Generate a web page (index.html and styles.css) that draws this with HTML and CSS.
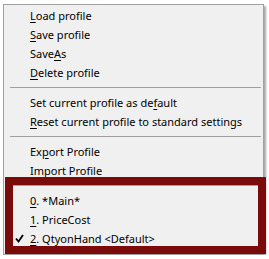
FILE: index.html
```html
<!DOCTYPE html>
<html lang="en">
<head>
  <meta charset="UTF-8">
  <title>Profile menu</title>
  <link rel="stylesheet" href="styles.css">
</head>
<body>

<div class="menu">
  <div class="item"><u>L</u>oad profile</div>
  <div class="item"><u>S</u>ave profile</div>
  <div class="item">Save<u>A</u>s</div>
  <div class="item"><u>D</u>elete profile</div>
  <div class="sep"></div>
  <div class="item">Set current profile as de<u>f</u>ault</div>
  <div class="item"><u>R</u>eset current profile to standard settings</div>
  <div class="sep"></div>
  <div class="item">Ex<u>p</u>ort Profile</div>
  <div class="item"><u>I</u>mport Profile</div>
  <div class="sep"></div>
  <div class="item"><u>0</u>. *Main*</div>
  <div class="item"><u>1</u>. PriceCost</div>
  <div class="item checked">
    <svg class="check" width="9" height="9" viewBox="0 0 9 9"><path d="M1 4.5 L3.5 7.5 L8 1" fill="none" stroke="#000" stroke-width="1.8"/></svg>
    <u>2</u>. QtyonHand &lt;Default&gt;
  </div>
</div>

<div class="highlight"></div>

</body>
</html>
```

FILE: styles.css
```css
body {
  margin: 0;
  background: #fff;
  font-family: "Noto Sans", "Open Sans", sans-serif;
  font-size: 11px;
  color: #000;
}

.menu {
  position: relative;
  margin: 4px 0 0 3px;
  width: 259px;
  padding: 1px 0 6px 0;
  background: #f0f0f0;
  border: 1px solid #a0a0a0;
  box-shadow: 2px 2px 2px rgba(0,0,0,0.35);
}

.item {
  height: 19px;
  line-height: 19px;
  padding-left: 26px;
  white-space: nowrap;
}

.item u {
  text-decoration-thickness: 1px;
  text-underline-offset: 2px;
}

.sep {
  height: 11px;
  display: flex;
  align-items: center;
  padding: 0 2px 0 6px;
}

.sep::after {
  content: "";
  flex: 1;
  height: 1px;
  background: #a0a0a0;
}

.checked {
  position: relative;
}

.check {
  position: absolute;
  left: 11px;
  top: 5px;
}

.highlight {
  position: absolute;
  left: 5px;
  top: 177px;
  width: 245px;
  height: 61px;
  border: 8px solid #7b0b0b;
}
```
